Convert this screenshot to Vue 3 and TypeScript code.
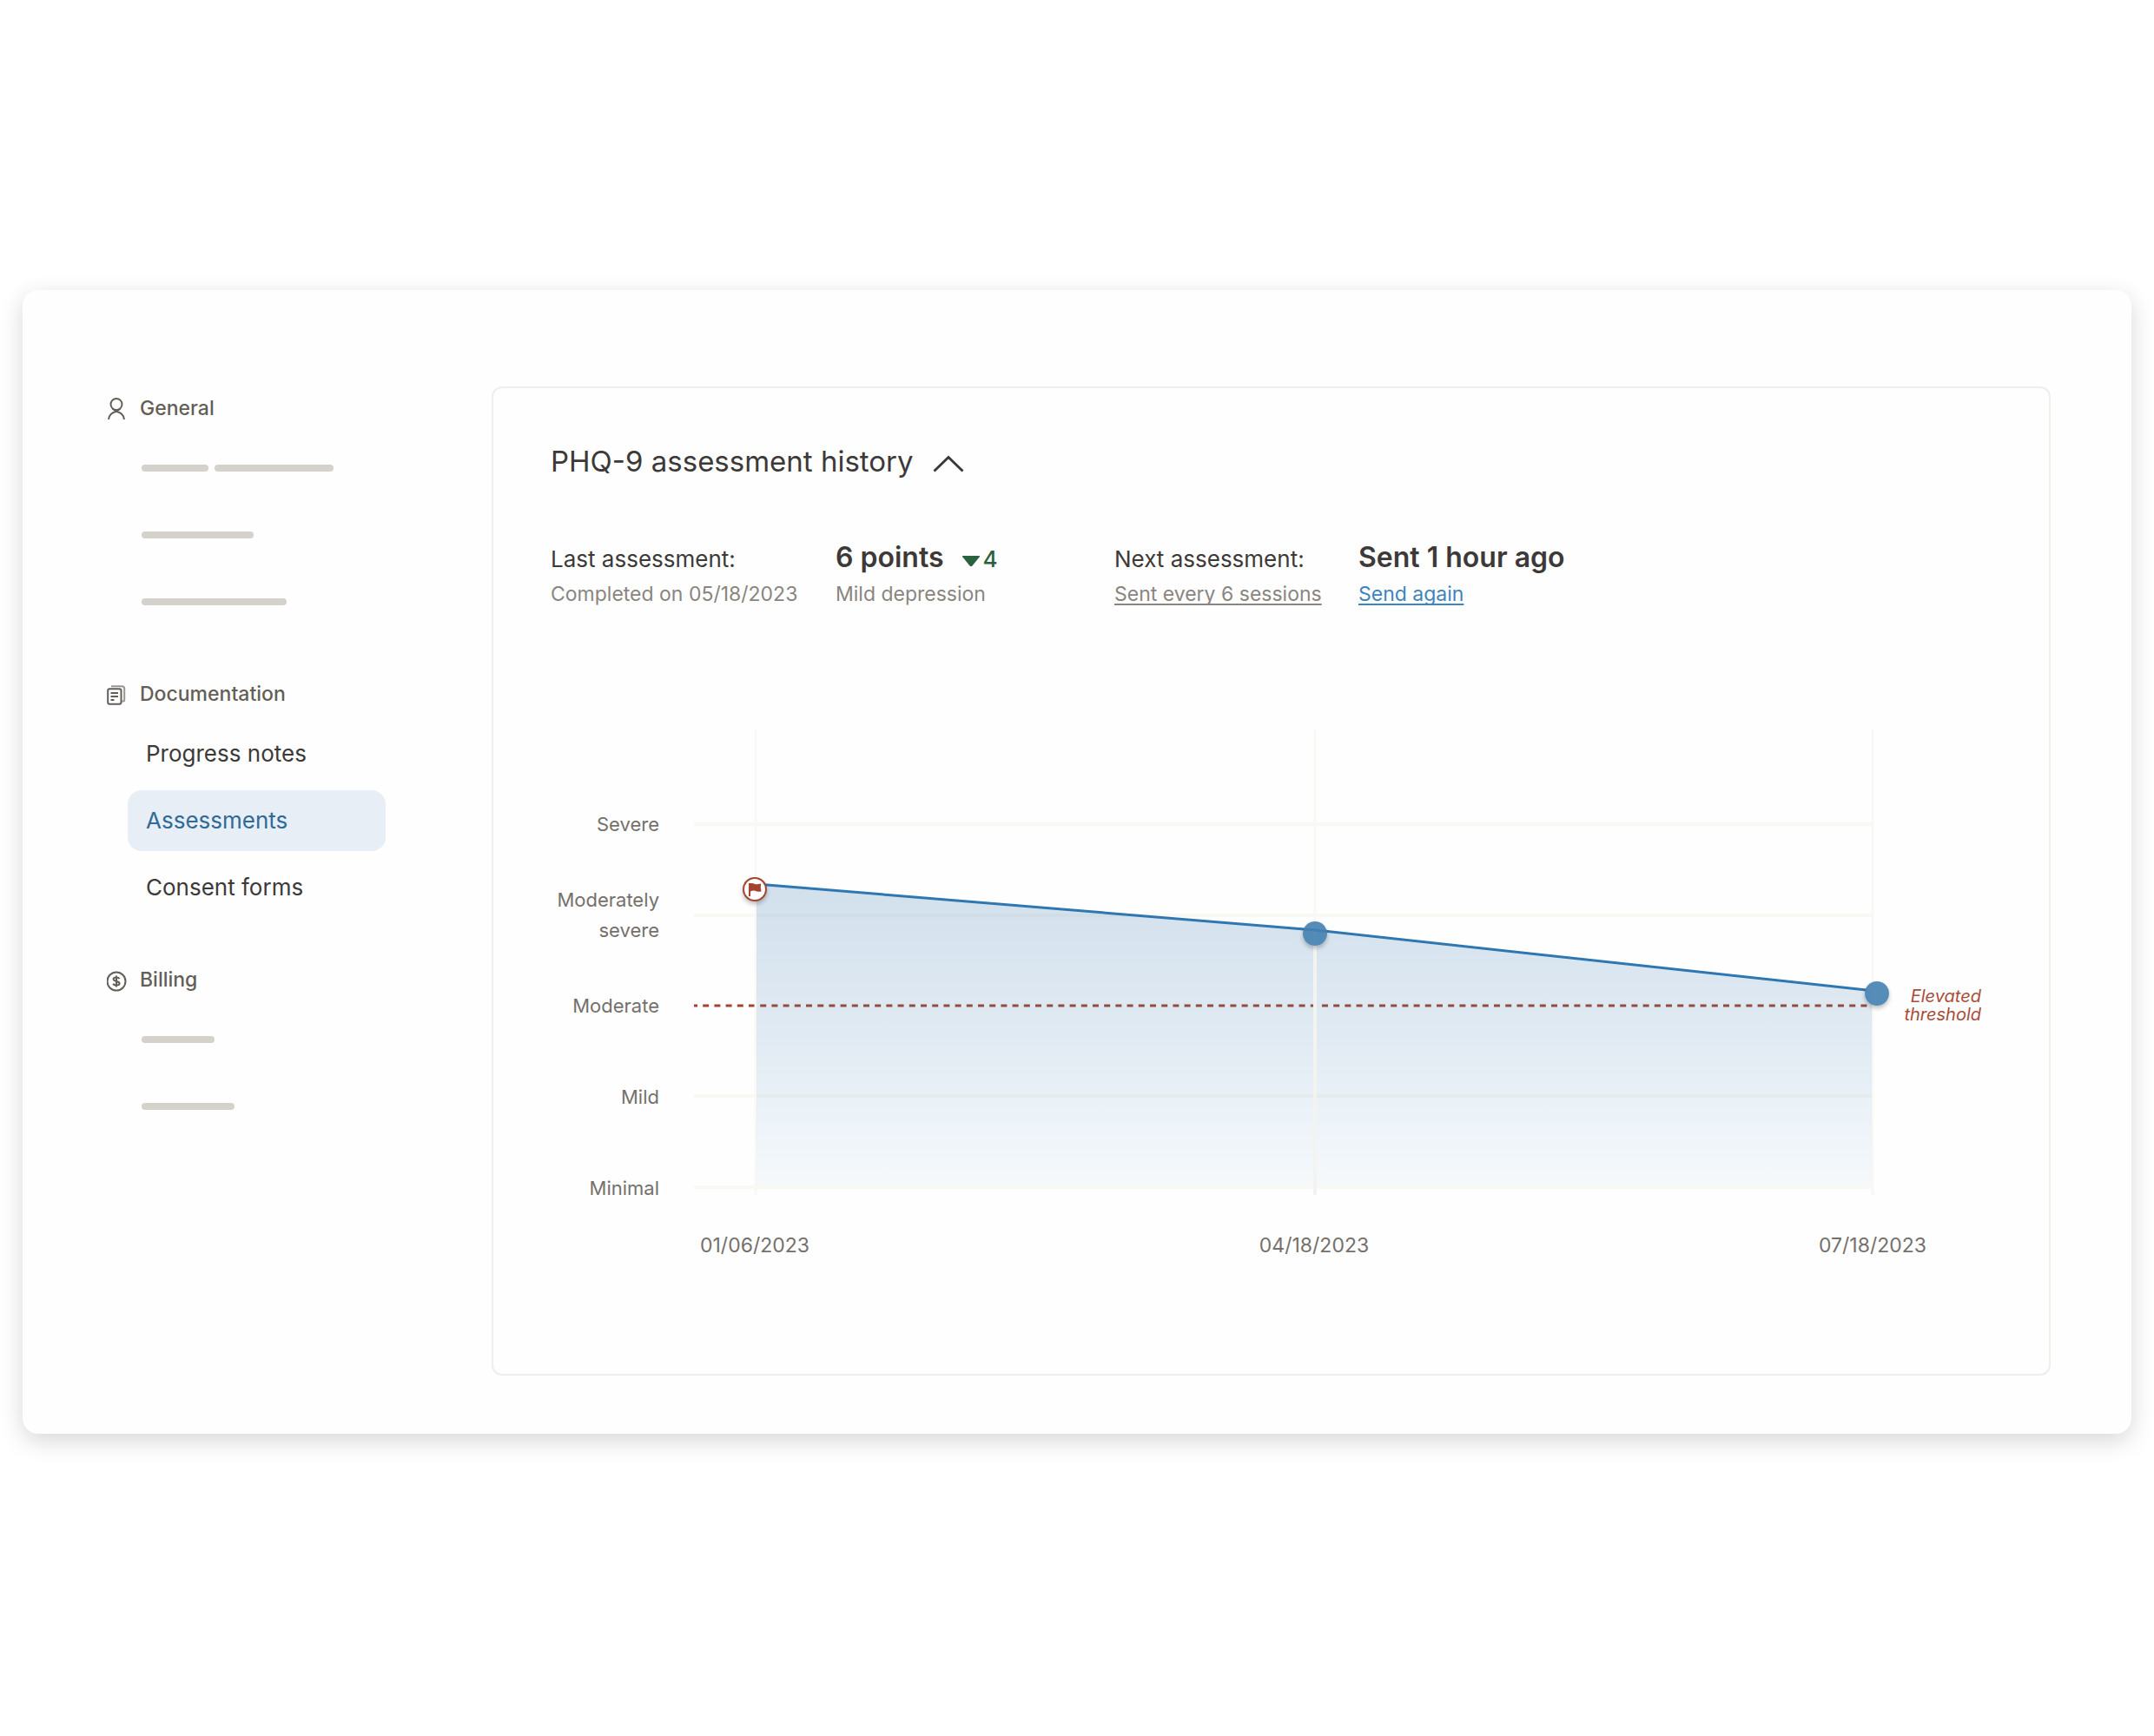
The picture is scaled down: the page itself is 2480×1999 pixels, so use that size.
<script setup lang="ts">
import { ref } from 'vue'

interface NavItem {
  label?: string
  bars?: number[]
  active?: boolean
}
interface NavGroup {
  title: string
  icon: 'person' | 'documents' | 'dollar'
  items: NavItem[]
}

const groups: NavGroup[] = [
  { title: 'General', icon: 'person', items: [{ bars: [77, 137] }, { bars: [129] }, { bars: [167] }] },
  {
    title: 'Documentation',
    icon: 'documents',
    items: [{ label: 'Progress notes' }, { label: 'Assessments', active: true }, { label: 'Consent forms' }],
  },
  { title: 'Billing', icon: 'dollar', items: [{ bars: [84] }, { bars: [107] }] },
]

const severities = ['Severe', 'Moderately severe', 'Moderate', 'Mild', 'Minimal']
const dates = ['01/06/2023', '04/18/2023', '07/18/2023']

// Plot coordinates share one 1358 x 536 space.
const plot = { width: 1358, height: 536 }
const gridX = [71, 715, 1357]
const gridY = [109, 214, 422, 527]
const points = [
  { x: 70, y: 184, flagged: true },
  { x: 715, y: 235, flagged: false },
  { x: 1362, y: 304, flagged: false },
]
const place = (p: { x: number; y: number }) => ({
  left: `${(p.x / plot.width) * 100}%`,
  top: `${(p.y / plot.height) * 100}%`,
})

const open = ref(true)
</script>

<template>
  <div class="page">
    <main class="card">
      <nav class="sidebar" aria-label="Client record">
        <section v-for="g in groups" :key="g.title" class="group">
          <h2 class="group-title">
            <svg v-if="g.icon === 'person'" class="icon" viewBox="0 0 24 28" fill="none" stroke="currentColor" stroke-width="2">
              <circle cx="11" cy="9.500" r="6.500" />
              <path d="M2 27c.4-4.800 4-8.200 9-9.300 5 1.100 8.600 4.500 9 9.300M6.500 14.500l4.500 3.500 4.500-3.500" />
            </svg>
            <svg v-else-if="g.icon === 'documents'" class="icon" viewBox="0 0 24 28" fill="none" stroke="currentColor" stroke-width="2">
              <path d="M5 5.200H17.500q2.700 0 2.700 2.700V21q0 1.500-1.500 1.500h-1.500" opacity=".65" />
              <rect x="1.200" y="8.200" width="15.300" height="17.600" rx="2" />
              <path d="M4.500 13h8.500M4.500 17h8.500M4.500 21h4" />
            </svg>
            <svg v-else class="icon" viewBox="0 0 24 28" fill="none" stroke="currentColor" stroke-width="2">
              <circle cx="11" cy="16" r="10.500" />
              <path d="M14.500 13.200c-.6-1.300-1.900-1.800-3.500-1.800-1.900 0-3.400.8-3.400 2.200 0 3.200 7 1.500 7 4.700 0 1.500-1.700 2.300-3.600 2.300s-3.200-.7-3.700-2M11 9.500v13" />
            </svg>
            {{ g.title }}
          </h2>
          <ul class="items">
            <li v-for="(item, i) in g.items" :key="i" class="item">
              <a v-if="item.label" href="#" class="link" :class="{ active: item.active }">{{ item.label }}</a>
              <span v-else class="bars">
                <span v-for="w in item.bars" :key="w" class="bar" :style="{ width: w + 'px' }"></span>
              </span>
            </li>
          </ul>
        </section>
      </nav>

      <section class="panel">
        <h1 class="panel-title">
          <button type="button" class="toggle" :aria-expanded="open" @click="open = !open">
            PHQ-9 assessment history
            <svg class="chevron" viewBox="0 0 36 20" fill="none" stroke="currentColor" stroke-width="3">
              <path d="M1.500 18.500 18 2.500l16.500 16" />
            </svg>
          </button>
        </h1>

        <div class="stats">
          <span class="label">Last assessment:</span>
          <span class="value">
            6 points
            <span class="delta">
              <svg class="down" viewBox="0 0 22 14" fill="currentColor">
                <path d="M1.500 1h19q1 .2.300 1.200l-8.300 10.300q-1.500 1.300-3 0L1.200 2.200Q.5 1.200 1.500 1z" />
              </svg>4
            </span>
          </span>
          <span class="label">Next assessment:</span>
          <span class="value">Sent 1 hour ago</span>
          <span class="note">Completed on 05/18/2023</span>
          <span class="note">Mild depression</span>
          <span class="note"><a href="#" class="under">Sent every 6 sessions</a></span>
          <span class="note"><a href="#" class="under blue">Send again</a></span>
        </div>

        <div class="chart">
          <ul class="y-axis">
            <li v-for="s in severities" :key="s">{{ s }}</li>
          </ul>
          <div class="plot">
            <svg class="plot-svg" :viewBox="`0 0 ${plot.width} ${plot.height}`" preserveAspectRatio="none" fill="none">
              <defs>
                <linearGradient id="fade" x1="0" y1="0" x2="0" y2="1">
                  <stop offset="0" stop-color="#2b70ab" stop-opacity=".21" />
                  <stop offset=".5" stop-color="#2b70ab" stop-opacity=".14" />
                  <stop offset="1" stop-color="#2b80c0" stop-opacity=".04" />
                </linearGradient>
              </defs>
              <path v-for="y in gridY" :key="y" :d="`M0 ${y}H1358`" stroke="#f8f8f4" stroke-width="4" />
              <path d="M0 318H1358" stroke="#a5442e" stroke-width="3" stroke-dasharray="7 6.200" stroke-dashoffset="3" />
              <path v-for="x in gridX" :key="x" :d="`M${x} 0V536`" stroke="#f8f8f4" stroke-width="3" />
              <path d="M72 178 715 231 1356 300V525H72z" fill="url(#fade)" />
              <path d="M715 231V536" stroke="#f3f4f1" stroke-width="4" />
              <path d="M72 178 715 231 1350 300" stroke="#2f77b1" stroke-width="3" />
            </svg>
            <span v-for="p in points" :key="p.x" class="marker" :class="{ flagged: p.flagged }" :style="place(p)">
              <svg v-if="p.flagged" class="flag" viewBox="0 0 16 18" fill="currentColor">
                <path d="M0 1h2.200v16H0zM2 1.500c3-1.500 4.500.8 7 .8 2 0 3.500-.3 6-.8l-.3 4.500.8 5c-3 .8-5 .6-7-.3-2-.8-4-.7-6.500.3z" />
              </svg>
            </span>
          </div>
          <p class="threshold">Elevated threshold</p>
          <div class="x-axis">
            <span v-for="d in dates" :key="d">{{ d }}</span>
          </div>
        </div>
      </section>
    </main>
  </div>
</template>

<style>
body {
  margin: 0;
  background: #fff;
}
</style>

<style scoped>
.page {
  box-sizing: border-box;
  min-height: 100vh;
  padding: 334px 26px 80px;
  font-family: Inter, 'Liberation Sans', sans-serif;
  color: #3d3938;
}
.card {
  display: flex;
  align-items: flex-start;
  padding: 111px 93px 67px 97px;
  border-radius: 18px;
  background: #fefefe;
  box-shadow: 0 8px 28px rgba(0, 0, 0, 0.16);
}
ul,
h1,
h2,
p {
  margin: 0;
  padding: 0;
  list-style: none;
  font-weight: 400;
}
.sidebar {
  flex: 0 0 321px;
  margin-right: 122px;
  padding-top: 9px;
}
.group + .group {
  margin-top: 55px;
}
.group-title {
  display: flex;
  align-items: center;
  gap: 14px;
  height: 32px;
  font-size: 23px;
  line-height: 32px;
  font-weight: 500;
  color: #645e59;
}
.icon {
  width: 24px;
  height: 28px;
}
.items {
  display: flex;
  flex-direction: column;
  gap: 7px;
  margin: 18px 0 0 24px;
}
.item {
  display: flex;
  align-items: center;
  height: 70px;
}
.link {
  flex: 1;
  padding-left: 21px;
  border-radius: 16px;
  font-size: 26px;
  line-height: 70px;
  color: inherit;
  text-decoration: none;
}
.link.active {
  background: #e7eef5;
  color: #2f6a98;
}
.bars {
  display: flex;
  gap: 7px;
  padding-left: 16px;
}
.bar {
  height: 8px;
  border-radius: 4px;
  background: #d4d2cb;
}
.panel {
  flex: 1;
  min-width: 0;
  padding: 64px 78px 132px 66px;
  border: 2px solid #eeeeea;
  border-radius: 12px;
}
.panel-title {
  display: flex;
}
.toggle {
  display: flex;
  align-items: center;
  gap: 22px;
  padding: 0;
  border: 0;
  background: none;
  font: inherit;
  font-size: 33px;
  line-height: 40px;
  color: inherit;
  cursor: pointer;
}
.chevron {
  width: 36px;
  height: 20px;
  margin-top: 6px;
}
.stats {
  display: grid;
  grid-template-columns: 328px 321px 281px auto;
  justify-content: start;
  align-items: baseline;
  row-gap: 4px;
  margin-top: 71px;
  white-space: nowrap;
}
.label {
  font-size: 26px;
  line-height: 32px;
}
.value {
  display: flex;
  align-items: baseline;
  gap: 20px;
  font-size: 32px;
  line-height: 40px;
  font-weight: 600;
}
.delta {
  display: flex;
  align-items: baseline;
  gap: 3px;
  font-size: 26px;
  font-weight: 500;
  color: #2a6240;
}
.down {
  width: 22px;
  height: 14px;
  margin-bottom: 3px;
}
.note {
  font-size: 23px;
  line-height: 32px;
  color: #8a8580;
}
.under {
  color: inherit;
  text-decoration: underline;
  text-decoration-thickness: 2px;
  text-decoration-skip-ink: none;
  text-underline-offset: 3px;
}
.under.blue {
  color: #3f84bc;
}
.chart {
  display: grid;
  grid-template-columns: 125px minmax(0, 1fr) 124px;
  grid-template-rows: 536px 32px;
  row-gap: 42px;
  margin-top: 140px;
  font-size: 23px;
  color: #75706b;
}
.y-axis {
  grid-row: 1 / 3;
  display: flex;
  flex-direction: column;
  height: 524px;
  margin-top: 57px;
  font-size: 22px;
  line-height: 35px;
  text-align: right;
}
.y-axis li {
  flex: 1;
  display: flex;
  align-items: center;
  justify-content: flex-end;
}
.plot {
  position: relative;
  margin-left: 40px;
}
.plot-svg {
  display: block;
  width: 100%;
  height: 100%;
  overflow: visible;
}
.marker {
  position: absolute;
  box-sizing: border-box;
  display: flex;
  align-items: center;
  justify-content: center;
  width: 28px;
  height: 28px;
  margin: -14px 0 0 -14px;
  border-radius: 50%;
  background: rgba(68, 128, 176, 0.9);
  box-shadow: 0 3px 5px rgba(0, 0, 0, 0.25);
}
.marker.flagged {
  border: 2px solid #a5442e;
  background: #fff;
  color: #a5442e;
}
.flag {
  width: 15px;
  height: 17px;
}
.threshold {
  margin-top: 297px;
  padding-left: 30px;
  font-size: 20px;
  line-height: 21px;
  font-style: italic;
  text-align: right;
  color: #a94d38;
}
.x-axis {
  grid-column: 2;
  display: flex;
  justify-content: space-between;
  margin: 0 -61px 0 47px;
  line-height: 32px;
}
</style>
